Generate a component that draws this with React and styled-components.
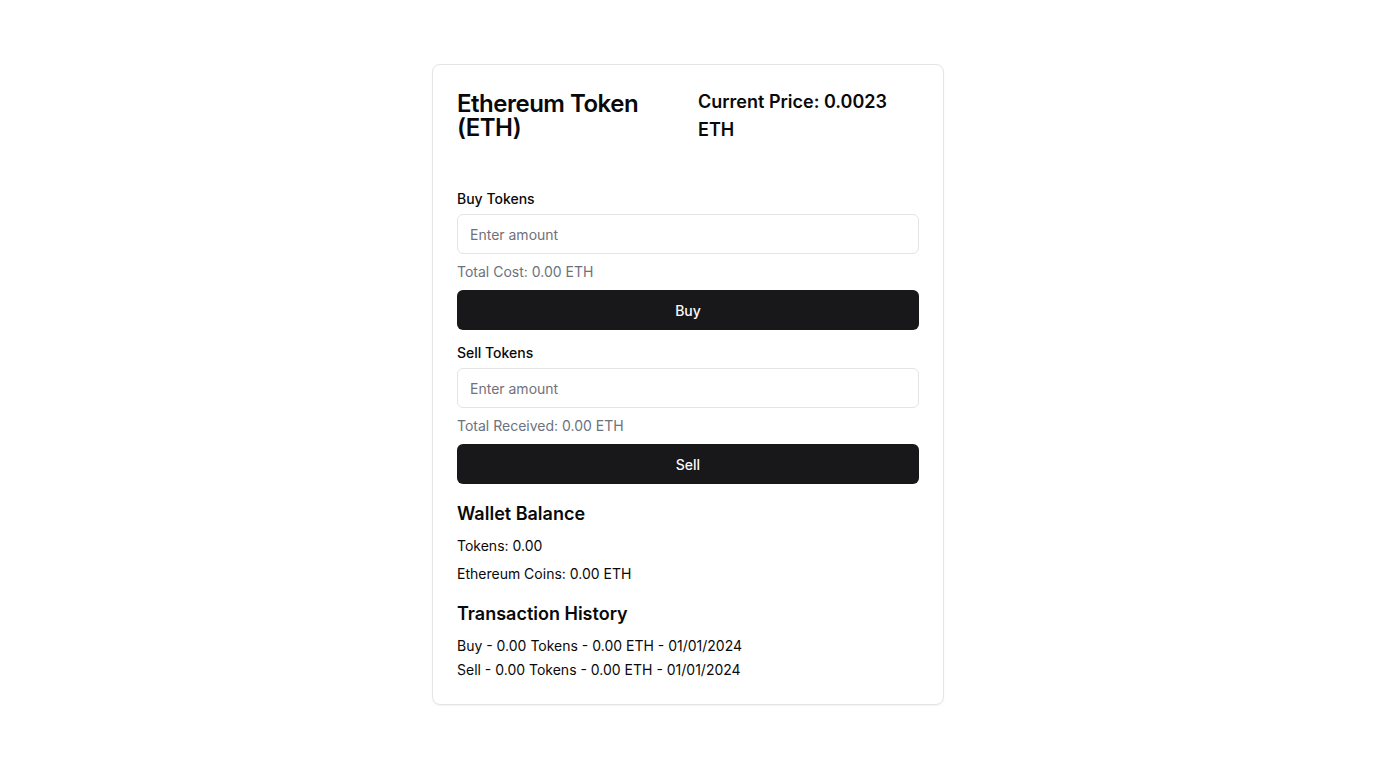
import styled, { createGlobalStyle } from "styled-components";

const GlobalStyle = createGlobalStyle`
  * { box-sizing: border-box; }
  body {
    margin: 0;
    background: #ffffff;
    font-family: Inter, "Noto Sans", sans-serif;
    color: #09090b;
  }
`;

const Page = styled.div`
  min-height: 100vh;
  display: flex;
  justify-content: center;
  padding-top: 64px;
`;

const Card = styled.div`
  width: 512px;
  height: 641px;
  border: 1px solid #e4e4e7;
  border-radius: 8px;
  box-shadow: 0 1px 2px rgba(0, 0, 0, 0.05);
  padding: 23px 24px 24px;
  display: flex;
  flex-direction: column;
`;

const Header = styled.div`
  display: grid;
  grid-template-columns: 241px 1fr;
  align-items: center;
`;

const Title = styled.h1`
  margin: 0;
  font-size: 24px;
  line-height: 24px;
  font-weight: 600;
  letter-spacing: -0.5px;
`;

const Price = styled.div`
  font-size: 18px;
  line-height: 28px;
  font-weight: 600;
`;

const Section = styled.div`
  display: flex;
  flex-direction: column;
  margin-top: ${({ top }) => top}px;
`;

const Label = styled.label`
  font-size: 14px;
  line-height: 20px;
  font-weight: 500;
  margin-bottom: 5px;
`;

const Input = styled.input`
  height: 40px;
  width: 100%;
  border: 1px solid #e4e4e7;
  border-radius: 6px;
  padding: 0 12px;
  font-family: inherit;
  font-size: 14px;
  color: #09090b;
  outline: 0;
  &::placeholder {
    color: #71717a;
  }
`;

const Hint = styled.p`
  margin: 8px 0;
  font-size: 14px;
  line-height: 20px;
  color: #6b7280;
`;

const Button = styled.button`
  height: 40px;
  width: 100%;
  border: 0;
  border-radius: 6px;
  background: #18181b;
  color: #fafafa;
  font-family: inherit;
  font-size: 14px;
  font-weight: 500;
  cursor: pointer;
`;

const Heading = styled.h2`
  margin: 0 0 8px;
  font-size: 18px;
  line-height: 28px;
  font-weight: 600;
`;

const Line = styled.p`
  margin: 0 0 ${({ gap }) => gap}px;
  font-size: 14px;
  line-height: 20px;
  &:last-child {
    margin-bottom: 0;
  }
`;

function TradeBlock({ top, title, hint, action }) {
  return (
    <Section top={top}>
      <Label>{title}</Label>
      <Input placeholder="Enter amount" />
      <Hint>{hint}</Hint>
      <Button>{action}</Button>
    </Section>
  );
}

export default function App() {
  return (
    <>
      <GlobalStyle />
      <Page>
        <Card>
          <Header>
            <Title>Ethereum Token (ETH)</Title>
            <Price>Current Price: 0.0023 ETH</Price>
          </Header>
          <TradeBlock top={45} title="Buy Tokens" hint="Total Cost: 0.00 ETH" action="Buy" />
          <TradeBlock top={13} title="Sell Tokens" hint="Total Received: 0.00 ETH" action="Sell" />
          <Section top={16}>
            <Heading>Wallet Balance</Heading>
            <Line gap={8}>Tokens: 0.00</Line>
            <Line gap={8}>Ethereum Coins: 0.00 ETH</Line>
          </Section>
          <Section top={16}>
            <Heading>Transaction History</Heading>
            <Line gap={4}>Buy - 0.00 Tokens - 0.00 ETH - 01/01/2024</Line>
            <Line gap={4}>Sell - 0.00 Tokens - 0.00 ETH - 01/01/2024</Line>
          </Section>
        </Card>
      </Page>
    </>
  );
}
